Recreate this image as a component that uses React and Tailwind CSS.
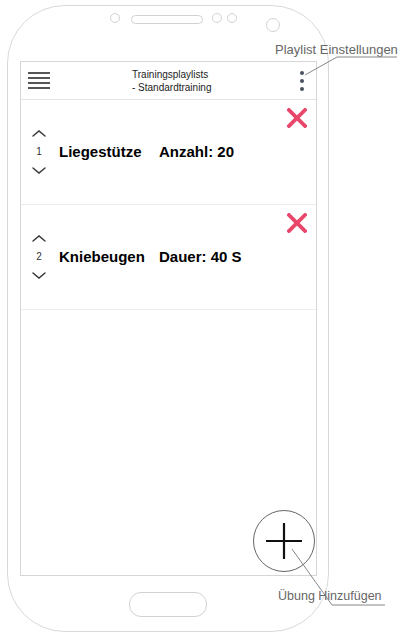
import { useState } from "react";

const exercises = [
  { id: 1, name: "Liegestütze", detail: "Anzahl: 20" },
  { id: 2, name: "Kniebeugen", detail: "Dauer: 40 S" },
];

function Chevron({ up }) {
  return (
    <svg viewBox="0 0 14 7" className="h-[7px] w-[14px]" fill="none" stroke="#333" strokeWidth="1.4" strokeLinecap="round">
      <polyline points={up ? "1 6 7 1 13 6" : "1 1 7 6 13 1"} />
    </svg>
  );
}

function ExerciseRow({ exercise, onRemove }) {
  return (
    <div className="flex h-[105px] items-center border-b border-[#ececec] pl-[11px] pr-[9px]">
      <div className="flex w-[14px] flex-col items-center gap-[10px]">
        <Chevron up />
        <span className="text-[10px] leading-none text-[#333]">{exercise.id}</span>
        <Chevron />
      </div>
      <div className="ml-[13px] flex text-[15px] font-bold text-black">
        <span className="w-[100px]">{exercise.name}</span>
        <span>{exercise.detail}</span>
      </div>
      <button type="button" onClick={() => onRemove(exercise.id)} className="ml-auto mt-[8px] self-start" aria-label="Entfernen">
        <svg viewBox="0 0 20 20" className="h-[20px] w-[20px]" stroke="#e8476a" strokeWidth="3.8" strokeLinecap="square">
          <line x1="2" y1="2" x2="18" y2="18" />
          <line x1="18" y1="2" x2="2" y2="18" />
        </svg>
      </button>
    </div>
  );
}

export default function App() {
  const [items, setItems] = useState(exercises);

  return (
    <div className="relative h-[642px] w-[404px] overflow-hidden bg-white font-['Liberation_Sans',Arial,sans-serif]">
      <div className="ml-[7px] mt-[5px] flex h-[627px] w-[322px] flex-col items-start rounded-[58px] border border-[#d9d9d9]">
        {/* speaker / camera */}
        <div className="flex items-start pl-[102px]">
          <span className="mt-[7px] h-[10px] w-[10px] rounded-full border border-[#d2d2d2]" />
          <span className="ml-[11px] mt-[9px] h-[9px] w-[72px] rounded-full border border-[#d2d2d2]" />
          <span className="ml-[9px] mt-[7px] h-[10px] w-[10px] rounded-full border border-[#d2d2d2]" />
          <span className="ml-[5px] mt-[7px] h-[10px] w-[10px] rounded-full border border-[#d2d2d2]" />
          <span className="ml-[29px] mt-[12px] h-[14px] w-[14px] rounded-full border border-[#d2d2d2]" />
        </div>

        {/* screen */}
        <div className="relative ml-[12px] mt-[29px] flex h-[515px] w-[297px] flex-col border border-[#d6d6d6]">
          <div className="flex h-[38px] items-center border-b border-[#e4e4e4] pl-[7px] pr-[12px]">
            <div className="flex w-[22px] flex-col gap-[3.5px]">
              <span className="h-[1.5px] bg-[#555]" />
              <span className="h-[1.5px] bg-[#555]" />
              <span className="h-[1.5px] bg-[#555]" />
              <span className="h-[1.5px] bg-[#555]" />
            </div>
            <div className="ml-[82px] text-[10px] leading-[13px] text-[#222]">
              <div>Trainingsplaylists</div>
              <div>- Standardtraining</div>
            </div>
            <div className="ml-auto flex flex-col gap-[4px]">
              <span className="h-[4px] w-[4px] rounded-full bg-[#4a5260]" />
              <span className="h-[4px] w-[4px] rounded-full bg-[#4a5260]" />
              <span className="h-[4px] w-[4px] rounded-full bg-[#4a5260]" />
            </div>
          </div>

          {items.map((exercise) => (
            <ExerciseRow
              key={exercise.id}
              exercise={exercise}
              onRemove={(id) => setItems((list) => list.filter((e) => e.id !== id))}
            />
          ))}

          <button
            type="button"
            aria-label="Übung hinzufügen"
            className="absolute bottom-[3px] right-[1px] flex h-[62px] w-[62px] items-center justify-center rounded-full border border-[#666] bg-white"
          >
            <svg viewBox="0 0 36 36" className="h-[36px] w-[36px]" stroke="#111" strokeWidth="2.2">
              <line x1="0" y1="18" x2="36" y2="18" />
              <line x1="18" y1="0" x2="18" y2="36" />
            </svg>
          </button>
        </div>

        {/* home button */}
        <span className="ml-[121px] mt-[16px] h-[25px] w-[78px] rounded-[12px] border border-[#d2d2d2]" />
      </div>

      {/* annotations */}
      <span className="absolute left-[275px] top-[40px] text-[13px] text-[#666]">Playlist Einstellungen</span>
      <span className="absolute left-[278px] top-[587px] text-[12.5px] text-[#666]">Übung Hinzufügen</span>
      <svg className="pointer-events-none absolute left-0 top-0 h-[642px] w-[404px]" viewBox="0 0 404 642" fill="none" stroke="#888" strokeWidth="1">
        <polyline points="305,75 337,57 397,57" />
        <polyline points="292,549 332,605 385,605" />
      </svg>
    </div>
  );
}
